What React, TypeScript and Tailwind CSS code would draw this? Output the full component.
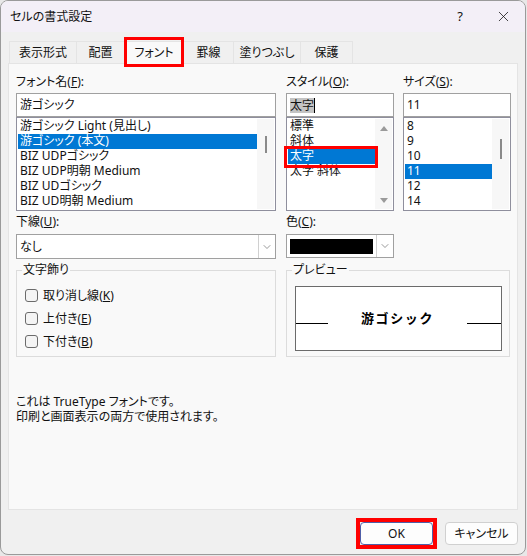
import type { ReactNode } from "react";
import { ChevronDown, X } from "lucide-react";

const fontNames = [
  "游ゴシック Light (見出し)",
  "游ゴシック (本文)",
  "BIZ UDPゴシック",
  "BIZ UDP明朝 Medium",
  "BIZ UDゴシック",
  "BIZ UD明朝 Medium",
];
const styles = ["標準", "斜体", "太字", "太字 斜体"];
const sizes = ["8", "9", "10", "11", "12", "14"];

const tabs = [
  { label: "表示形式", w: "w-[68px]" },
  { label: "配置", w: "w-[48px]" },
  { label: "フォント", w: "w-[59px]", active: true },
  { label: "罫線", w: "w-[50px]" },
  { label: "塗りつぶし", w: "w-[67px]" },
  { label: "保護", w: "w-[52px]" },
];

function ListBox({
  items,
  selected,
  width,
  thumb,
  arrows,
}: {
  items: string[];
  selected: number;
  width: string;
  thumb?: string;
  arrows?: boolean;
}) {
  return (
    <div className={`${width} h-[94px] border border-[#8f8f9d] bg-white flex`}>
      <div className="flex-1 min-w-0 pl-px pt-px">
        {items.map((item, i) => (
          <div
            key={item}
            className={`h-[15px] pl-[2px] text-[12px] leading-[14px] whitespace-nowrap ${
              i === selected ? "bg-[#0078d4] text-white" : "text-[#111]"
            }`}
          >
            {item}
          </div>
        ))}
      </div>
      <div className="w-[17px] mr-px my-px bg-[#f7f7f7] flex flex-col items-center relative">
        {thumb && <div className={`w-[2px] bg-[#8a8a8a] ${thumb}`} />}
        {arrows && (
          <>
            <div className="mt-[7px] w-0 h-0 border-x-[4px] border-x-transparent border-b-[5px] border-b-[#9a9a9a]" />
            <div className="mt-auto mb-[6px] w-0 h-0 border-x-[4px] border-x-transparent border-t-[5px] border-t-[#9a9a9a]" />
          </>
        )}
      </div>
    </div>
  );
}

function Check({ label, hot }: { label: string; hot: string }) {
  return (
    <div className="flex items-center h-[23px]">
      <div className="w-[13px] h-[13px] rounded-[3px] border border-[#6b6b6b] bg-[#f4f4f4]" />
      <span className="ml-[5px] text-[12px] text-[#111]">
        {label}(<span className="underline">{hot}</span>)
      </span>
    </div>
  );
}

function Group({ title, width, children }: { title: string; width: string; children: ReactNode }) {
  return (
    <div className={`${width} h-[87px] border border-[#dcdcdc] relative`}>
      <span className="absolute left-[5px] top-[-9px] px-[1px] bg-[#f9f9f9] text-[12px] leading-[15px] text-[#111]">
        {title}
      </span>
      {children}
    </div>
  );
}

export default function App() {
  return (
    <div className="w-[527px] h-[556px] bg-[#e8e8e8] overflow-hidden font-['Noto_Sans','Noto_Sans_CJK_JP',sans-serif] [font-feature-settings:'palt']">
      <div className="w-[526px] h-[555px] bg-[#f0f0f0] border border-[#9a9a9a] rounded-lg overflow-hidden flex flex-col">
        {/* title bar */}
        <div className="h-[31px] shrink-0 bg-[#f3eff7] flex items-center pl-[9px] text-[12px] text-[#111]">
          <span>セルの書式設定</span>
          <span className="ml-auto text-[13px]">?</span>
          <X size={17} strokeWidth={1.1} className="ml-[32px] mr-[13px]" />
        </div>

        {/* tabs */}
        <div className="h-[22px] mt-[9px] ml-[8px] shrink-0 flex relative z-10">
          {tabs.map((t) => (
            <div
              key={t.label}
              className={`${t.w} relative flex items-center justify-center text-[12px] text-[#111] border-t border-r border-[#e4e4e4] first:border-l ${
                t.active ? "bg-[#f9f9f9] h-[23px]" : "bg-[#f0f0f0]"
              }`}
            >
              {t.label}
              {t.active && (
                <div className="absolute left-[-1px] right-[-1px] top-[-5px] h-[30px] border-[3px] border-[#ff0000]" />
              )}
            </div>
          ))}
        </div>

        {/* panel */}
        <div className="ml-[7px] w-[510px] h-[447px] shrink-0 bg-[#f9f9f9] border border-[#e4e4e4] pl-[7px] relative text-[12px] text-[#111]">
          <div className="flex mt-[9px] h-[20px] items-start leading-[17px]">
            <div className="w-[270px]">
              フォント名(<span className="underline">F</span>):
            </div>
            <div className="w-[117px]">
              スタイル(<span className="underline">O</span>):
            </div>
            <div>
              サイズ(<span className="underline">S</span>):
            </div>
          </div>

          <div className="flex">
            <div className="w-[270px]">
              <div className="w-[260px] h-[24px] border border-[#a0a0a0] bg-white pl-[3px] leading-[22px]">游ゴシック</div>
            </div>
            <div className="w-[117px]">
              <div className="w-[108px] h-[24px] border border-[#a0a0a0] bg-white pl-[3px] flex items-center">
                <span className="bg-[#c4c4c4] leading-[15px]">太字</span>
                <span className="w-px h-[15px] bg-black" />
              </div>
            </div>
            <div className="w-[108px] h-[24px] border border-[#a0a0a0] bg-white pl-[3px] leading-[22px]">11</div>
          </div>

          <div className="flex">
            <div className="w-[270px]">
              <ListBox items={fontNames} selected={1} width="w-[260px]" thumb="mt-[17px] h-[17px]" />
            </div>
            <div className="w-[117px]">
              <ListBox items={styles} selected={2} width="w-[108px]" arrows />
            </div>
            <ListBox items={sizes} selected={3} width="w-[108px]" thumb="mt-[20px] h-[20px]" />
          </div>

          <div className="flex mt-px h-[22px] leading-[20px]">
            <div className="w-[270px]">
              下線(<span className="underline">U</span>):
            </div>
            <div>
              色(<span className="underline">C</span>):
            </div>
          </div>

          <div className="flex">
            <div className="w-[270px]">
              <div className="w-[260px] h-[25px] border border-[#a0a0a0] bg-white pl-[3px] flex items-center">
                なし
                <div className="ml-auto w-[17px] h-[23px] border-l border-[#d0d0d0] flex items-center justify-center">
                  <ChevronDown size={12} strokeWidth={1.2} className="text-[#555]" />
                </div>
              </div>
            </div>
            <div className="w-[108px] h-[24px] border border-[#a0a0a0] bg-white pl-[3px] flex items-center">
              <div className="w-[83px] h-[15px] bg-black" />
              <div className="ml-auto w-[17px] h-[22px] border-l border-[#d0d0d0] flex items-center justify-center">
                <ChevronDown size={12} strokeWidth={1.2} className="text-[#555]" />
              </div>
            </div>
          </div>

          <div className="flex mt-[11px]">
            <div className="w-[270px]">
              <Group title="文字飾り" width="w-[260px]">
                <div className="pl-[8px] pt-[13px]">
                  <Check label="取り消し線" hot="K" />
                  <Check label="上付き" hot="E" />
                  <Check label="下付き" hot="B" />
                </div>
              </Group>
            </div>
            <Group title="プレビュー" width="w-[224px]">
              <div className="ml-[8px] mt-[15px] w-[207px] h-[65px] border border-[#6b6b6b] bg-white flex items-center justify-between">
                <div className="w-[32px] h-px bg-black mt-[10px]" />
                <span className="font-bold text-[13px] tracking-[1.6px] text-black [font-feature-settings:normal]">游ゴシック</span>
                <div className="w-[34px] h-px bg-black mt-[10px]" />
              </div>
            </Group>
          </div>

          <div className="mt-[37px] leading-[15px]">
            <div>これは TrueType フォントです。</div>
            <div>印刷と画面表示の両方で使用されます。</div>
          </div>

          {/* red box around 太字 */}
          <div className="absolute left-[275px] top-[82px] w-[94px] h-[22px] border-[3px] border-[#ff0000]" />
        </div>

        {/* buttons */}
        <div className="flex justify-end mt-[12px] mr-[7px] gap-[12px] text-[12px] text-[#111]">
          <div className="relative w-[73px] h-[23px] bg-[#fdfdfd] rounded-[4px] border border-[#4f5fa8] flex items-center justify-center">
            OK
            <div className="absolute left-[-5px] right-[-5px] top-[-5px] bottom-[-5px] border-[4px] border-[#ff0000]" />
          </div>
          <div className="w-[73px] h-[23px] bg-[#fdfdfd] rounded-[4px] border border-[#d0d0d0] flex items-center justify-center">
            キャンセル
          </div>
        </div>
      </div>
    </div>
  );
}
